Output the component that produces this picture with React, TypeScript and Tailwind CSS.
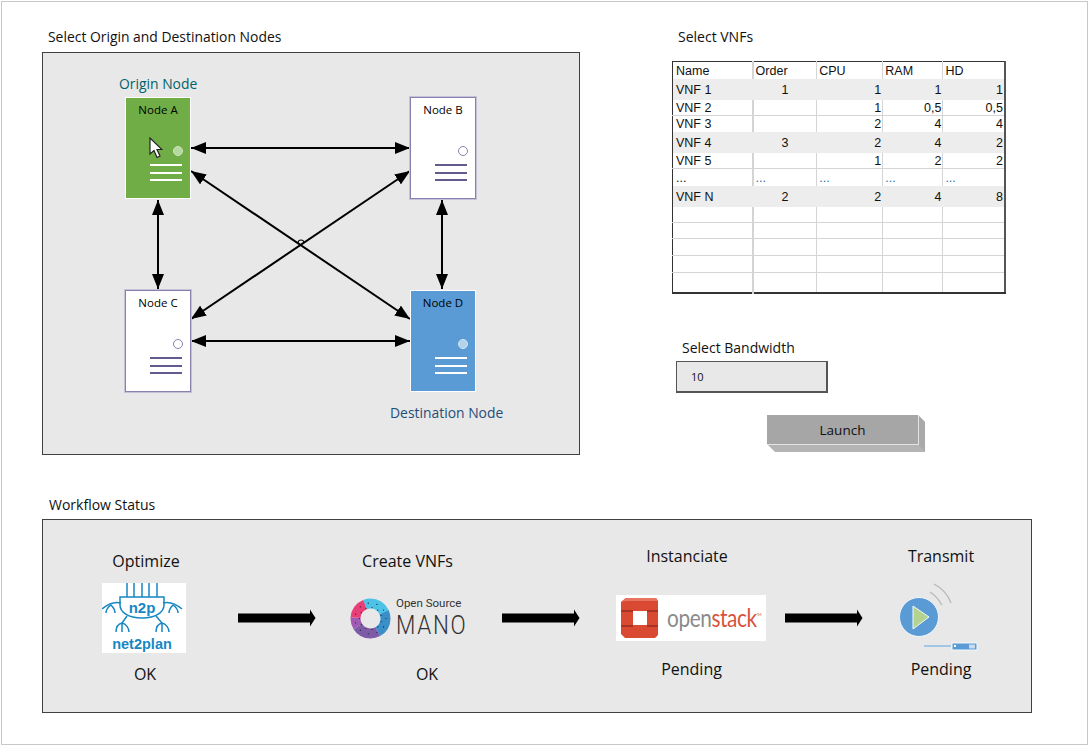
const rows: { t: string; h: string; gray?: boolean; c: string[] }[] = [
  { t: "VNF 1", h: "h-[21px]", gray: true, c: ["1", "1", "1", "1"] },
  { t: "VNF 2", h: "h-[16px]", c: ["", "1", "0,5", "0,5"] },
  { t: "VNF 3", h: "h-[16px]", c: ["", "2", "4", "4"] },
  { t: "VNF 4", h: "h-[21px]", gray: true, c: ["3", "2", "4", "2"] },
  { t: "VNF 5", h: "h-[16px]", c: ["", "1", "2", "2"] },
  { t: "...", h: "h-[17px]", c: ["...", "...", "...", "..."] },
  { t: "VNF N", h: "h-[21px]", gray: true, c: ["2", "2", "4", "8"] },
  { t: "", h: "h-[16px]", c: ["", "", "", ""] },
  { t: "", h: "h-[16px]", c: ["", "", "", ""] },
  { t: "", h: "h-[17px]", c: ["", "", "", ""] },
  { t: "", h: "h-[17px]", c: ["", "", "", ""] },
  { t: "", h: "h-[20px]", c: ["", "", "", ""] },
];

function ServerNode({ label, tone, pos }: { label: string; tone: "green" | "white" | "blue"; pos: string }) {
  const box =
    tone === "green"
      ? "bg-[#70ad47] border-white text-black"
      : tone === "blue"
        ? "bg-[#5b9bd5] border-white text-black"
        : "bg-white border-[#8a80ad] ring-1 ring-[#c5c1d8] text-black";
  const dot = tone === "green" ? "bg-[#b5d8a0] border-[#cfe5c0]" : tone === "blue" ? "bg-[#b3d2ee] border-[#d5e6f5]" : "bg-white border-[#8a80ad]";
  const line = tone === "white" ? "bg-[#645a8e]" : "bg-white";
  return (
    <div className={`absolute ${pos} flex h-[102px] w-[66px] flex-col items-center border ${box}`}>
      <div className="mt-[4px] text-[11.5px] leading-[15px]">{label}</div>
      <div className={`mt-[29px] ml-[40px] h-[10px] w-[10px] rounded-full border ${dot}`} />
      <div className={`mt-[8px] ml-[16px] h-[2px] w-[32px] ${line}`} />
      <div className={`mt-[6px] ml-[16px] h-[2px] w-[32px] ${line}`} />
      <div className={`mt-[5px] ml-[16px] h-[2px] w-[32px] ${line}`} />
    </div>
  );
}

function BlockArrow() {
  return (
    <svg width="78" height="18" viewBox="0 0 78 18" className="shrink-0">
      <path d="M0 4.5H72V0.5L77.5 9L72 17.5V13.5H0Z" fill="#000" />
    </svg>
  );
}

function Net2Plan() {
  return (
    <svg width="84" height="70" viewBox="0 0 84 70" className="bg-white">
      <g fill="none" stroke="#1787c4" strokeWidth="1.5">
        <path d="M25 0V14M32 0V14M40 0V14M47 0V14M55 0V14" />
        <path d="M18 14H62V22C62 29 54 35 40 35C26 35 18 29 18 22Z" />
        <path d="M19 20C12 18 6 21 0 26M9 22C6 24 4 27 4 30M9 22C11 24 13 27 13 30" />
        <path d="M61 20C68 18 74 21 80 26M71 22C69 24 67 27 67 30M71 22C74 24 76 27 76 30" />
        <path d="M25 33L20 40M20 40C16 41 14 45 14 49M20 40V49M20 40C24 41 27 45 27 49" />
        <path d="M54 33L60 40M60 40C56 41 54 45 54 49M60 40V49M60 40C64 41 67 45 67 49" />
      </g>
      <text x="40" y="30" textAnchor="middle" fill="#1787c4" fontSize="15" fontWeight="700" fontFamily="Liberation Sans, sans-serif">n2p</text>
      <text x="40" y="66" textAnchor="middle" fill="#1787c4" fontSize="14.5" fontWeight="700" fontFamily="Liberation Sans, sans-serif">net2plan</text>
    </svg>
  );
}

function Mano() {
  const dots = Array.from({ length: 22 }, (_, i) => i * (Math.PI / 11));
  return (
    <div className="flex h-[43px] w-[118px] items-center">
      <svg width="41" height="41" viewBox="0 0 41 41" className="shrink-0">
        <g fill="none" strokeWidth="10" transform="rotate(-90 20.5 20.5)">
          <circle cx="20.5" cy="20.5" r="15" pathLength="100" stroke="#4cc3e6" strokeDasharray="24 76" strokeDashoffset="6" />
          <circle cx="20.5" cy="20.5" r="15" pathLength="100" stroke="#3a8fc9" strokeDasharray="24 76" strokeDashoffset="-18" />
          <circle cx="20.5" cy="20.5" r="15" pathLength="100" stroke="#7d5ba6" strokeDasharray="24 76" strokeDashoffset="-42" />
          <circle cx="20.5" cy="20.5" r="15" pathLength="100" stroke="#a05bb5" strokeDasharray="10 90" strokeDashoffset="-66" />
          <circle cx="20.5" cy="20.5" r="15" pathLength="100" stroke="#e83f78" strokeDasharray="18 82" strokeDashoffset="-76" />
        </g>
        {dots.map((a, i) => (
          <circle key={i} cx={20.5 + Math.cos(a) * (i % 2 ? 11 : 15.5)} cy={20.5 + Math.sin(a) * (i % 2 ? 11 : 15.5)} r="0.6" fill="#222" />
        ))}
      </svg>
      <div className="ml-[5px] flex flex-col font-['Roboto',sans-serif] leading-none text-[#333]">
        <span className="text-[11.5px] leading-[13px]">Open Source</span>
        <span className="origin-left scale-x-[0.86] text-[26px] font-light leading-[30px] tracking-[2px]">MANO</span>
      </div>
    </div>
  );
}

function OpenStack() {
  return (
    <div className="flex h-[46px] w-[150px] items-center bg-white pl-[4px]">
      <svg width="39" height="42" viewBox="0 0 39 42" className="shrink-0">
        <path fillRule="evenodd" d="M1 5L6 1L36 1L38 4V38L35 41H5L1 37ZM13 14V28H27V14Z" fill="#da4a32" />
        <path d="M1 13H13V15H1ZM1 28H13V30H1ZM27 13H38V15H27ZM27 28H38V30H27Z" fill="#a93322" />
        <path d="M1 5L6 1H36L38 4H6Z" fill="#e8735e" />
      </svg>
      <span className="ml-[8px] origin-left scale-x-[0.85] whitespace-nowrap font-['Lato',sans-serif] text-[24.5px] leading-none tracking-[-0.5px] text-[#8a8a8a]">
        open<span className="text-[#d9523c]">stack</span>
        <sup className="align-super text-[4px] text-[#d9523c]">TM</sup>
      </span>
    </div>
  );
}

function Transmit() {
  return (
    <svg width="82" height="76" viewBox="0 0 82 76">
      <path d="M34 7C42 11 48 18 51 26" fill="none" stroke="#b5b5b5" strokeWidth="1.2" />
      <path d="M30 15C35 18 39 23 42 28" fill="none" stroke="#b5b5b5" strokeWidth="1.2" />
      <circle cx="19" cy="40" r="19.5" fill="#5b9bd5" stroke="#f4f8fc" strokeWidth="1" />
      <path d="M13 29V52L29 40Z" fill="#b3d38e" stroke="#f4f8fc" strokeWidth="1" />
      <path d="M24 69H51" stroke="#a4c6e6" strokeWidth="2" />
      <rect x="52" y="66" width="25" height="7" fill="#5b9bd5" stroke="#f4f8fc" strokeWidth="1" />
      <rect x="54" y="68" width="2" height="2" fill="#fff" />
      <rect x="69" y="67.5" width="6" height="4" fill="#c9dcef" />
    </svg>
  );
}

export default function App() {
  return (
    <div className="h-[746px] w-[1089px] bg-white p-px font-['Open_Sans',sans-serif] text-[#111]">
      <div className="h-[744px] w-[1087px] border border-[#c8c8c8]">
        <div className="flex items-start">
          <div className="ml-[40px] w-[538px]">
            <div className="mt-[26px] ml-[6px] h-[24px] text-[13.9px] leading-[18px]">Select Origin and Destination Nodes</div>
            <div className="relative h-[403px] w-[538px] border border-[#404040] bg-[#e8e8e8]">
              <div className="absolute top-[22px] left-[76px] text-[13.9px] leading-[18px] text-[#00626a]">Origin Node</div>
              <svg className="absolute inset-0" width="536" height="401" viewBox="0 0 536 401">
                <defs>
                  <marker id="ah" markerWidth="15" markerHeight="12" refX="15" refY="6" orient="auto-start-reverse" markerUnits="userSpaceOnUse">
                    <path d="M0 0L15 6L0 12Z" fill="#000" />
                  </marker>
                </defs>
                <g stroke="#000" strokeWidth="2" fill="none">
                  <path d="M148 95H367" markerStart="url(#ah)" markerEnd="url(#ah)" />
                  <path d="M148 288H367" markerStart="url(#ah)" markerEnd="url(#ah)" />
                  <path d="M115 147V236" markerStart="url(#ah)" markerEnd="url(#ah)" />
                  <path d="M399 147V236" markerStart="url(#ah)" markerEnd="url(#ah)" />
                  <path d="M148 118L367 266" markerStart="url(#ah)" markerEnd="url(#ah)" />
                  <path d="M148 266L367 118" markerStart="url(#ah)" markerEnd="url(#ah)" />
                  <path d="M255 190a3 3 0 0 1 6 0" strokeWidth="1.2" />
                </g>
              </svg>
              <ServerNode label="Node A" tone="green" pos="top-[44px] left-[82px]" />
              <ServerNode label="Node B" tone="white" pos="top-[44px] left-[367px]" />
              <ServerNode label="Node C" tone="white" pos="top-[237px] left-[82px]" />
              <ServerNode label="Node D" tone="blue" pos="top-[237px] left-[367px]" />
              <svg className="absolute top-[84px] left-[106px]" width="14" height="22" viewBox="0 0 14 22">
                <path d="M1 1V17L5 13.5L8 20.5L11 19L8 12.5H13Z" fill="#fff" stroke="#222" strokeWidth="1.2" />
              </svg>
              <div className="absolute top-[351px] left-[347px] text-[13.9px] leading-[18px] text-[#1f4e79]">Destination Node</div>
            </div>
          </div>
          <div className="ml-[92px]">
            <div className="mt-[26px] ml-[6px] h-[33px] text-[14px] leading-[18px]">Select VNFs</div>
            <table className="w-[334px] table-fixed border-collapse border-t border-r-2 border-b-2 border-l border-t-[#333] border-r-[#555] border-b-[#333] border-l-[#333] font-['Liberation_Sans',sans-serif] text-[12.5px] leading-[14px]">
              <colgroup>
                <col className="w-[80px]" />
                <col className="w-[64px]" />
                <col className="w-[66px]" />
                <col className="w-[60px]" />
                <col className="w-[62px]" />
              </colgroup>
              <thead>
                <tr className="h-[17px]">
                  {["Name", "Order", "CPU", "RAM", "HD"].map((h, i) => (
                    <th key={h} className={`p-0 pt-[2px] text-left font-normal ${i === 0 ? "border-r-2 border-r-[#d4d4d4] pl-[3px]" : i < 4 ? "border-r border-r-[#d4d4d4] pl-[2px]" : "pl-[2px]"}`}>
                      {h}
                    </th>
                  ))}
                </tr>
              </thead>
              <tbody>
                {rows.map((r, ri) => (
                  <tr key={ri} className={`${r.h} ${r.gray ? "bg-[#ededed]" : ""} ${ri === rows.length - 1 || r.gray || rows[ri + 1]?.gray ? "" : "border-b border-b-[#d4d4d4]"}`}>
                    <td className={`border-r-2 p-0 pt-[1px] pl-[3px] ${r.gray ? "border-r-[#ededed]" : "border-r-[#d4d4d4]"}`}>{r.t}</td>
                    {r.c.map((v, i) => (
                      <td
                        key={i}
                        className={`p-0 pt-[1px] ${i < 3 ? (r.gray ? "border-r border-r-[#ededed]" : "border-r border-r-[#d4d4d4]") : ""} ${v === "..." ? "pl-[2px] text-left text-[#2f6f9f]" : i === 0 ? "text-center" : "pr-[1px] text-right"}`}
                      >
                        {v}
                      </td>
                    ))}
                  </tr>
                ))}
              </tbody>
            </table>
            <div className="mt-[45px] ml-[10px] h-[22px] text-[14px] leading-[18px]">Select Bandwidth</div>
            <div className="ml-[4px] flex h-[32px] w-[152px] items-center border border-r-2 border-b-2 border-[#555] bg-[#e8e8e8] pt-[3px] pl-[14px] text-[11px]">10</div>
            <div className="relative mt-[22px] ml-[95px] h-[38px] w-[158px]">
              <svg className="absolute top-0 left-0" width="158" height="38" viewBox="0 0 158 38">
                <path d="M151 0L158 7V37H8L0 29H151Z" fill="#b4b4b4" />
                <path d="M151 0L158 7V37L151 29Z" fill="#a9a9a9" />
              </svg>
              <div className="relative flex h-[30px] w-[152px] items-center justify-center border-r border-b border-[#e4e4e4] bg-[#a6a6a6] pt-[2px] text-[13.5px]">Launch</div>
            </div>
          </div>
        </div>
        <div className="ml-[47px] mt-[41px] h-[23px] text-[14px] leading-[18px]">Workflow Status</div>
        <div className="ml-[40px] flex h-[194px] w-[990px] items-start border border-[#404040] bg-[#e8e8e8]">
          <div className="ml-[59px] flex w-[84px] flex-col items-center">
            <div className="mt-[30px] ml-[4px] h-[33px] text-[16px] leading-[22px]">Optimize</div>
            <Net2Plan />
            <div className="mt-[10px] ml-[2px] text-[16px] leading-[22px]">OK</div>
          </div>
          <div className="mt-[89px] ml-[52px]"><BlockArrow /></div>
          <div className="ml-[34px] flex w-[118px] flex-col items-center">
            <div className="mt-[30px] -ml-[3px] h-[47px] text-[16px] leading-[22px]">Create VNFs</div>
            <Mano />
            <div className="mt-[23px] ml-[36px] text-[16px] leading-[22px]">OK</div>
          </div>
          <div className="mt-[89px] ml-[34px]"><BlockArrow /></div>
          <div className="ml-[36px] flex w-[150px] flex-col items-center">
            <div className="mt-[25px] -ml-[8px] h-[50px] text-[16px] leading-[22px]">Instanciate</div>
            <OpenStack />
            <div className="mt-[17px] ml-[1px] text-[16px] leading-[22px]">Pending</div>
          </div>
          <div className="mt-[89px] ml-[19px]"><BlockArrow /></div>
          <div className="ml-[37px] flex w-[82px] flex-col items-center">
            <div className="mt-[25px] h-[32px] text-[16px] leading-[22px]">Transmit</div>
            <Transmit />
            <div className="mt-[5px] text-[16px] leading-[22px]">Pending</div>
          </div>
        </div>
      </div>
    </div>
  );
}
